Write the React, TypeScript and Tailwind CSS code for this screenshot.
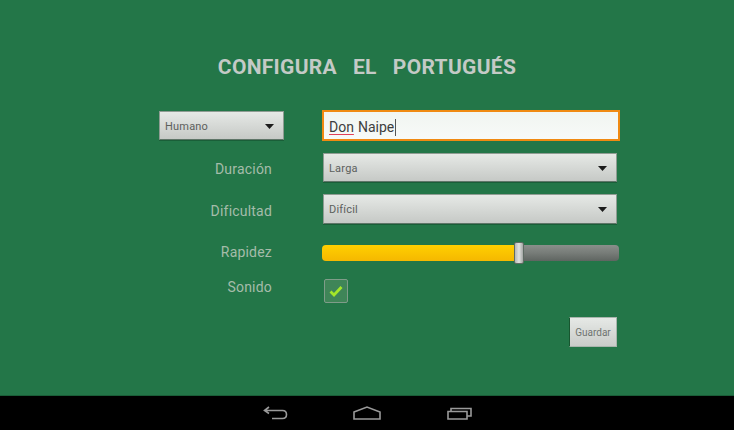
const selectFace =
  "bg-gradient-to-b from-[#e6e9e6] to-[#c6c9c6] border border-[#8f9c93] border-b-[#5f7568] shadow-[0_1px_0_#1a5e38]";

function Caret() {
  return (
    <svg width="9" height="5" viewBox="0 0 9 5" className="mt-[1px] shrink-0">
      <path d="M0 0H9L4.5 5Z" fill="#1c1c1c" />
    </svg>
  );
}

function Select({ value, className }: { value: string; className: string }) {
  return (
    <div className={`flex items-center justify-between pl-[5px] pr-[9px] ${selectFace} ${className}`}>
      <span className="pt-[3px] text-[11px] tracking-[0.2px] text-[#5c605d]">{value}</span>
      <Caret />
    </div>
  );
}

function Row({
  label,
  className,
  labelClass,
  children,
}: {
  label: string;
  className: string;
  labelClass?: string;
  children: React.ReactNode;
}) {
  return (
    <div className={`flex items-center ${className}`}>
      <div className={`w-[272px] shrink-0 text-right text-[14px] tracking-[0.2px] text-[#a5bcaa] ${labelClass ?? ""}`}>
        {label}
      </div>
      {children}
    </div>
  );
}

export default function App() {
  return (
    <div className="flex h-[430px] w-[734px] flex-col overflow-hidden bg-[#237648] font-['Roboto',sans-serif]">
      <main className="h-[396px] shrink-0 border-b border-[#1a5e38]">
        <h1 className="mt-[55px] h-[24px] whitespace-pre text-center text-[21px] font-bold leading-[24px] tracking-[0.3px] text-[#c4cac6] [word-spacing:2.5px]">
          CONFIGURA  EL  PORTUGUÉS
        </h1>

        <div className="mt-[31px] flex items-center">
          <Select value="Humano" className="ml-[159px] h-[29px] w-[125px]" />
          <div className="ml-[38px] flex h-[31px] w-[298px] items-center border-2 border-[#f08a12] bg-gradient-to-b from-[#f1f5f1] to-[#f7faf8] pl-[5px] pt-[3px] text-[14px] text-[#3e3e3e]">
            <span className="underline decoration-[#e0405a] decoration-1 underline-offset-2">Don</span>
            <span className="ml-[4px]">Naipe</span>
            <span className="ml-px h-[17px] w-px bg-[#555]" />
          </div>
        </div>

        <Row label="Duración" labelClass="pt-[4px]" className="mt-[12px]">
          <Select value="Larga" className="ml-[51px] h-[29px] w-[294px]" />
        </Row>

        <Row label="Dificultad" labelClass="pt-[4px]" className="mt-[12px]">
          <Select value="Difícil" className="ml-[51px] h-[30px] w-[294px]" />
        </Row>

        <Row label="Rapidez" className="mt-[18px]">
          <div className="relative ml-[50px] flex h-[16px] w-[297px]">
            <div className="w-[195px] rounded-l-[4px] bg-gradient-to-b from-[#ffd000] to-[#f5b800]" />
            <div className="flex-1 rounded-r-[4px] bg-gradient-to-b from-[#8a8f8b] via-[#777c78] to-[#5f6561]" />
            <div className="absolute left-[192px] top-[-3px] h-[22px] w-[10px] rounded-[2px] border border-[#5f6b63] bg-gradient-to-r from-[#b4b7b5] via-[#e0e2e0] to-[#a4a7a5]" />
          </div>
        </Row>

        <Row label="Sonido" className="mt-[14px] items-start">
          <div className="ml-[52px] mt-[2px] flex h-[24px] w-[24px] items-center justify-center rounded-[2px] border border-[#7f9c89] bg-[#3f8558]">
            <svg width="14" height="12" viewBox="0 0 14 12">
              <path d="M1.5 6.5L5 10L12.5 2" fill="none" stroke="#a4e62a" strokeWidth="2.8" />
            </svg>
          </div>
        </Row>

        <div className="mt-[14px] flex justify-end pr-[117px]">
          <button className="h-[30px] w-[48px] border border-[#a9b5ad] border-l-[#17562f] bg-gradient-to-b from-[#e6e9e6] to-[#c9ccc9] text-[10px] text-[#6f7370]">
            Guardar
          </button>
        </div>
      </main>

      <nav className="flex flex-1 items-center bg-black pl-[263px]">
        <svg width="25" height="14" viewBox="0 0 25 14" fill="none" stroke="#9a9a9a" strokeWidth="1.6">
          <path d="M6 1L1.5 4.5L6 7.5M1.5 4.5H19.5Q23.5 4.5 23.5 8.5Q23.5 12.5 19.5 12.5H9" />
        </svg>
        <svg width="28" height="14" viewBox="0 0 28 14" fill="none" stroke="#9a9a9a" strokeWidth="1.6" className="ml-[65px]">
          <path d="M1 6L14 1L27 6V13H1Z" />
        </svg>
        <svg width="26" height="14" viewBox="0 0 26 14" fill="none" stroke="#9a9a9a" strokeWidth="1.6" className="ml-[66px]">
          <path d="M1 5.5H20V13H1ZM4 5V2.5H24V10H20" />
        </svg>
      </nav>
    </div>
  );
}
